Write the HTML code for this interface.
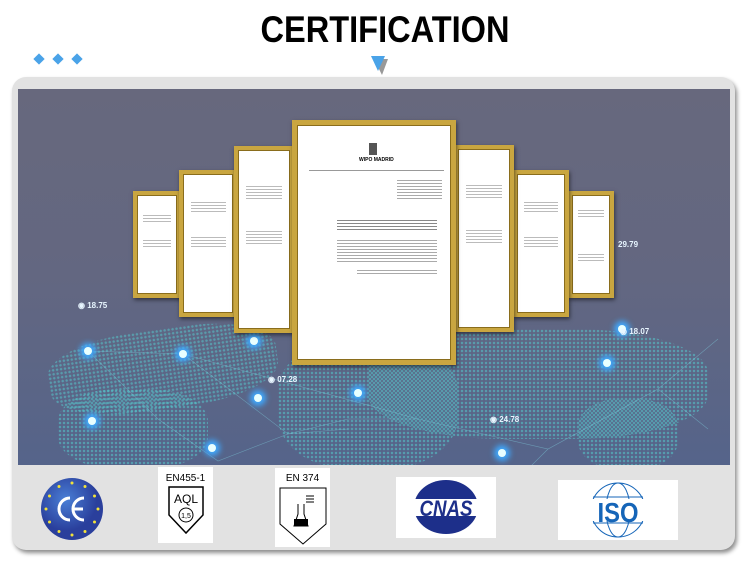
<!DOCTYPE html>
<html><head><meta charset="utf-8"><style>
*{margin:0;padding:0;box-sizing:border-box}
body{width:750px;height:565px;background:#fff;position:relative;overflow:hidden;font-family:"Liberation Sans",sans-serif}
.abs{position:absolute}
h1{position:absolute;left:0;width:770px;top:9px;text-align:center;font-size:37px;font-weight:bold;color:#000;transform:scaleX(0.88)}
.dia{position:absolute;top:55px;width:8px;height:8px;background:#4aa3e8;transform:rotate(45deg)}
.panel{left:12px;top:77px;width:723px;height:473px;background:#e2e2e2;border-radius:14px;box-shadow:2px 3px 4px rgba(0,0,0,.45)}
.scene{left:18px;top:89px;width:712px;height:376px;overflow:hidden;background:linear-gradient(#67687d 0%,#636781 50%,#55648a 100%)}
.dots{position:absolute;border-radius:40%;background-image:radial-gradient(circle,#56c8cc 40%,transparent 50%);background-size:4px 4px;opacity:.55}
.frame{position:absolute;background:#fff;border:4px solid #c9a640;box-shadow:0 0 0 1px #8a6d1c inset,1px 2px 4px rgba(0,0,0,.5)}
.frame i{position:absolute;left:15%;right:15%;height:8%;display:block;background:repeating-linear-gradient(#bbb 0 1px,transparent 1px 3px)}
.ln{position:absolute;height:1px;background:#999}
.glow{position:absolute;width:8px;height:8px;border-radius:50%;background:#e8ffff;box-shadow:0 0 6px 4px #3fa9ff}
.lbl{position:absolute;color:#e8f6ff;font-size:8px;font-weight:bold}
.logo{position:absolute;background:#fff}
</style></head><body>
<h1>CERTIFICATION</h1>
<div class="dia" style="left:35px"></div><div class="dia" style="left:54px"></div><div class="dia" style="left:73px"></div>
<svg class="abs" style="left:370px;top:55px" width="18" height="22"><polygon points="2,2 16,2 10,18" fill="#333" opacity=".5" transform="translate(2,2)"/><polygon points="1,1 15,1 8,16" fill="#4aa3e8"/></svg>
<div class="abs panel"></div>
<div class="abs scene">
 <div class="dots" style="left:30px;top:240px;width:230px;height:80px;transform:rotate(-8deg)"></div>
 <div class="dots" style="left:40px;top:300px;width:150px;height:80px"></div>
 <div class="dots" style="left:260px;top:250px;width:180px;height:130px"></div>
 <div class="dots" style="left:350px;top:240px;width:340px;height:110px"></div>
 <div class="dots" style="left:560px;top:310px;width:100px;height:70px"></div>
 <svg class="abs" style="left:0;top:0" width="712" height="376"><g stroke="#7fd0e0" stroke-width=".6" opacity=".5" fill="none">
 <path d="M70 262L165 265L400 330L530 360L640 300L700 250M70 262L140 330L200 372L270 345L330 330L400 330M165 265L270 345L330 340M400 330L530 360L480 410M640 300L690 340"/></g></svg>
 <div class="glow" style="left:66px;top:258px"></div><div class="glow" style="left:161px;top:261px"></div>
 <div class="glow" style="left:70px;top:328px"></div><div class="glow" style="left:236px;top:305px"></div>
 <div class="glow" style="left:336px;top:300px"></div><div class="glow" style="left:232px;top:248px"></div>
 <div class="glow" style="left:585px;top:270px"></div><div class="glow" style="left:480px;top:360px"></div>
 <div class="glow" style="left:600px;top:236px"></div><div class="glow" style="left:190px;top:355px"></div>
 <div class="lbl" style="left:60px;top:212px">◉ 18.75</div>
 <div class="lbl" style="left:600px;top:151px">29.79</div>
 <div class="lbl" style="left:602px;top:238px">◉ 18.07</div>
 <div class="lbl" style="left:250px;top:286px">◉ 07.28</div>
 <div class="lbl" style="left:472px;top:326px">◉ 24.78</div>
</div>
<div class="frame" style="left:133px;top:191px;width:48px;height:107px"><i style="top:20%"></i><i style="top:45%"></i></div>
<div class="frame" style="left:568px;top:191px;width:46px;height:107px"><i style="top:15%"></i><i style="top:60%"></i></div>
<div class="frame" style="left:179px;top:170px;width:58px;height:147px"><i style="top:20%"></i><i style="top:45%"></i></div>
<div class="frame" style="left:513px;top:170px;width:56px;height:147px"><i style="top:20%"></i><i style="top:45%"></i></div>
<div class="frame" style="left:234px;top:146px;width:60px;height:187px"><i style="top:20%"></i><i style="top:45%"></i></div>
<div class="frame" style="left:454px;top:145px;width:60px;height:187px"><i style="top:20%"></i><i style="top:45%"></i></div>
<div class="frame" style="left:292px;top:120px;width:164px;height:245px;border-width:5px">
 <div class="abs" style="left:72px;top:18px;width:8px;height:12px;background:#555"></div>
 <div class="abs" style="left:62px;top:32px;font-size:5px;font-weight:bold">WIPO MADRID</div>
 <div class="ln" style="left:12px;top:45px;width:135px"></div>
 <div class="ln" style="left:100px;top:55px;width:45px;height:20px;background:repeating-linear-gradient(#aaa 0 1px,transparent 1px 3px)"></div>
 <div class="ln" style="left:40px;top:95px;width:100px;height:12px;background:repeating-linear-gradient(#888 0 1px,transparent 1px 3px)"></div>
 <div class="ln" style="left:40px;top:115px;width:100px;height:22px;background:repeating-linear-gradient(#aaa 0 1px,transparent 1px 3px)"></div>
 <div class="ln" style="left:60px;top:145px;width:80px;height:5px;background:repeating-linear-gradient(#aaa 0 1px,transparent 1px 3px)"></div>
</div>
<svg class="abs" style="left:40px;top:477px" width="64" height="64"><defs><radialGradient id="g" cx=".4" cy=".35"><stop offset="0" stop-color="#4a7fd6"/><stop offset="1" stop-color="#2a3f9c"/></radialGradient></defs><circle cx="32" cy="32" r="31" fill="url(#g)"/>
<g fill="#f2e23a"><circle cx="32" cy="6" r="1.5"/><circle cx="45" cy="9.5" r="1.5"/><circle cx="54.5" cy="19" r="1.5"/><circle cx="58" cy="32" r="1.5"/><circle cx="54.5" cy="45" r="1.5"/><circle cx="45" cy="54.5" r="1.5"/><circle cx="32" cy="58" r="1.5"/><circle cx="19" cy="54.5" r="1.5"/><circle cx="9.5" cy="45" r="1.5"/><circle cx="6" cy="32" r="1.5"/><circle cx="9.5" cy="19" r="1.5"/><circle cx="19" cy="9.5" r="1.5"/></g>
<path d="M30 21A11 11 0 1 0 30 43M44 21A11 11 0 1 0 44 43M33 32H43" stroke="#fff" stroke-width="3" fill="none"/></svg>
<div class="logo" style="left:158px;top:467px;width:55px;height:76px">
 <div class="abs" style="left:0;width:55px;top:6px;text-align:center;font-size:10px">EN455-1</div>
 <svg class="abs" style="left:9px;top:18px" width="38" height="52"><path d="M2 2H36V30L19 48L2 30Z" fill="none" stroke="#000" stroke-width="1.5"/><text x="19" y="18" font-size="12" text-anchor="middle" font-family="Liberation Sans">AQL</text><circle cx="19" cy="30" r="7" fill="none" stroke="#000"/><text x="19" y="33" font-size="7" text-anchor="middle" font-family="Liberation Sans">1,5</text></svg>
</div>
<div class="logo" style="left:275px;top:468px;width:55px;height:79px">
 <div class="abs" style="left:0;width:55px;top:5px;text-align:center;font-size:10px">EN 374</div>
 <svg class="abs" style="left:3px;top:18px" width="50" height="60"><path d="M2 2H48V38L25 58L2 38Z" fill="none" stroke="#000" stroke-width="1"/><path d="M20 18V28L16 40H30L26 28V18" fill="none" stroke="#000"/><rect x="16" y="33" width="14" height="7"/><path d="M28 10h8M28 13h8M28 16h8" stroke="#000"/></svg>
</div>
<div class="logo" style="left:396px;top:477px;width:100px;height:61px">
 <svg width="100" height="61"><ellipse cx="50" cy="30" rx="32" ry="27" fill="#1d2f8a"/><rect x="10" y="22" width="80" height="17" fill="#fff"/><text x="50" y="39" font-size="22" font-weight="bold" font-style="italic" text-anchor="middle" fill="#1d2f8a" font-family="Liberation Sans" transform="translate(50 0) scale(.85 1) translate(-50 0)">CNAS</text></svg>
</div>
<div class="logo" style="left:558px;top:480px;width:120px;height:60px">
 <svg width="120" height="60"><g fill="none" stroke="#1565b8" stroke-width="1"><circle cx="60" cy="30" r="27"/><ellipse cx="60" cy="30" rx="12" ry="27"/><path d="M35 17H85M35 43H85"/></g><rect x="32" y="19" width="56" height="22" fill="#fff"/><text x="60" y="42" font-size="28" font-weight="bold" text-anchor="middle" fill="#1565b8" font-family="Liberation Sans" transform="translate(60 0) scale(.85 1) translate(-60 0)">ISO</text></svg>
</div>
</body></html>
